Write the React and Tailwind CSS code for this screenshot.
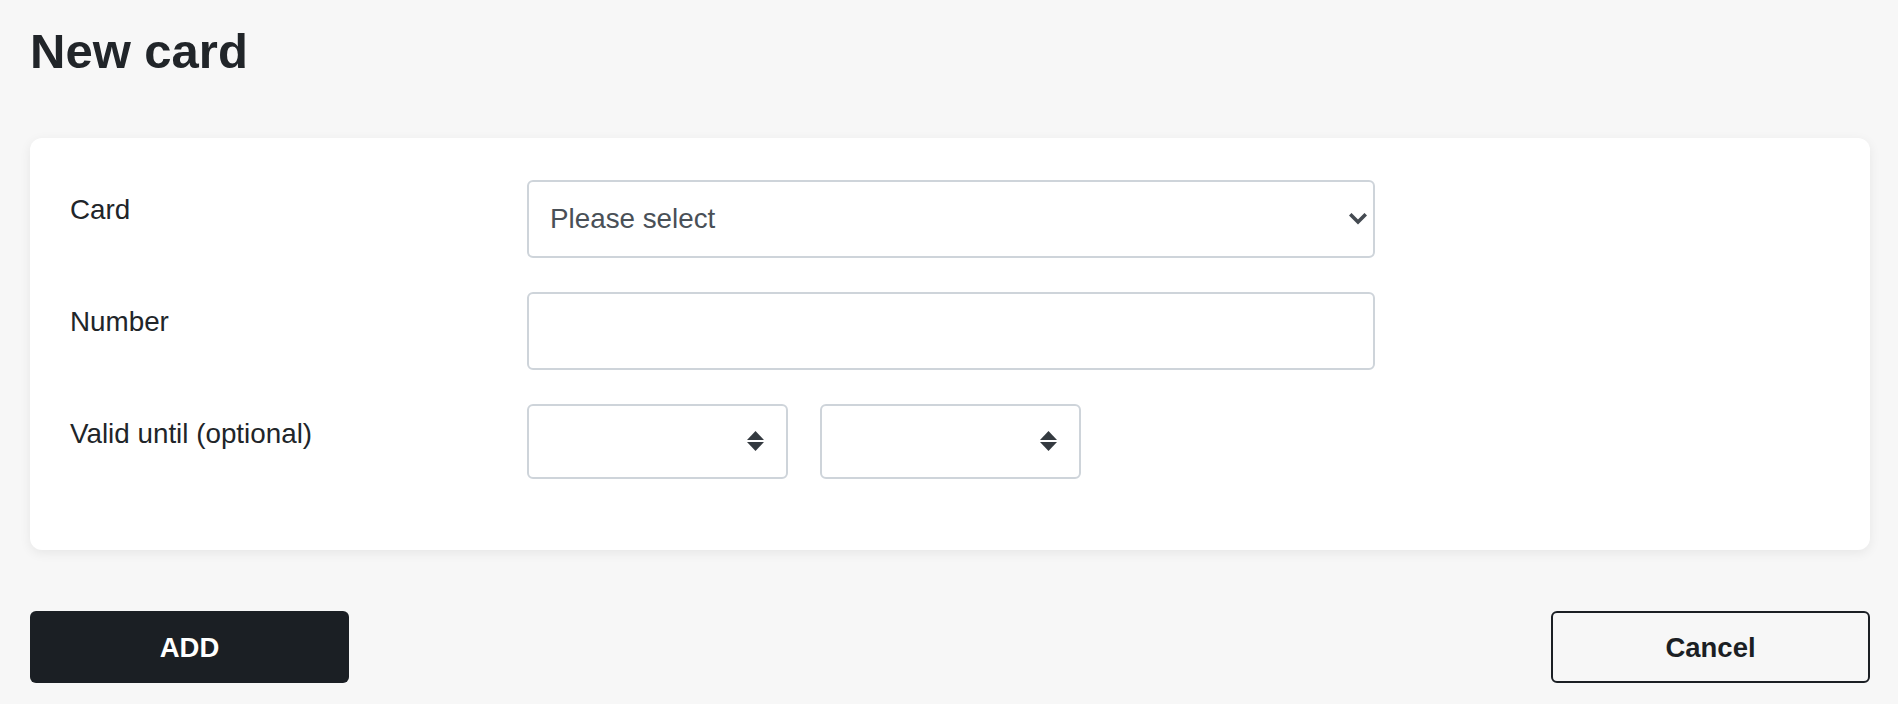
import React from 'react';

const Chevron = () => (
  <svg width="18" height="12" viewBox="0 0 18 12" fill="none">
    <polyline points="2.5,2.5 9,9 15.5,2.5" stroke="#454b52" strokeWidth="3.6" strokeLinecap="square" />
  </svg>
);

const Spinner = () => (
  <svg width="17" height="20" viewBox="0 0 17 20">
    <polygon points="8.5,0 17,9 0,9" fill="#343a40" />
    <polygon points="0,11 17,11 8.5,20" fill="#343a40" />
  </svg>
);

const Label = ({ children }) => (
  <div className="w-[457px] shrink-0 pt-[9px] text-[27.8px] leading-[42px]">{children}</div>
);

const SmallSelect = () => (
  <div className="flex h-[75px] w-[261px] items-center justify-end rounded-[6px] border-2 border-[#ced4da] bg-white pr-[22px]">
    <Spinner />
  </div>
);

export default function App() {
  return (
    <div className="min-h-screen bg-[#f7f7f7] pl-[30px] pr-[28px] pt-[22px] font-['Liberation_Sans',Arial,sans-serif] text-[#212529]">
      <h1 className="text-[49px] font-bold leading-[1.2]">New card</h1>

      {/* Form card */}
      <div className="mt-[57px] flex flex-col gap-[34px] rounded-xl bg-white px-[40px] pb-[71px] pt-[42px] shadow-[0_3px_12px_rgba(0,0,0,0.07)]">
        <div className="flex">
          <Label>Card</Label>
          <div className="flex h-[78px] w-[848px] items-center justify-between rounded-[6px] border-2 border-[#ced4da] pl-[21px] pr-[6px]">
            <span className="text-[27.8px] text-[#495057]">Please select</span>
            <Chevron />
          </div>
        </div>

        <div className="flex">
          <Label>Number</Label>
          <div className="h-[78px] w-[848px] rounded-[6px] border-2 border-[#ced4da]" />
        </div>

        <div className="flex">
          <Label>Valid until (optional)</Label>
          <div className="flex gap-[32px]">
            <SmallSelect />
            <SmallSelect />
          </div>
        </div>
      </div>

      {/* Actions */}
      <div className="mt-[61px] flex justify-between">
        <button className="h-[72px] w-[319px] rounded-[6px] bg-[#1b1f24] pt-[2px] text-[27.5px] font-bold text-white">
          ADD
        </button>
        <button className="h-[72px] w-[319px] rounded-[6px] border-2 border-[#1b1f24] pt-[2px] text-[27.5px] font-bold text-[#1b1f24]">
          Cancel
        </button>
      </div>
    </div>
  );
}
